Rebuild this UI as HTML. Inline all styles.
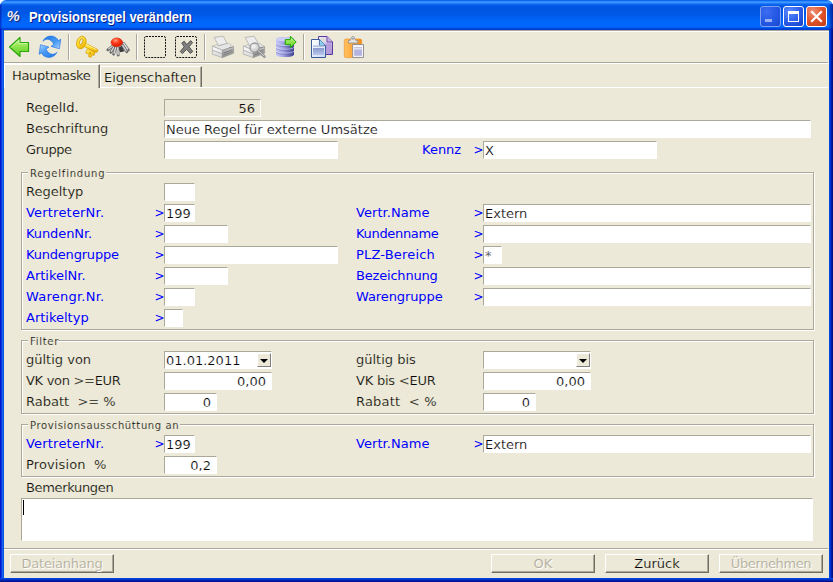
<!DOCTYPE html>
<html lang="de"><head><meta charset="utf-8"><title>Provisionsregel verändern</title>
<style>
html,body{margin:0;padding:0;background:#ECE9D8;}
body{width:833px;height:582px;position:relative;overflow:hidden;font-family:"DejaVu Sans","Liberation Sans",sans-serif;font-size:13px;color:#000;}
#win{position:absolute;left:0;top:0;width:833px;height:582px;background:#ECE9D8;overflow:hidden;}
#tb{position:absolute;left:0;top:0;width:833px;height:30px;border-radius:6px 6px 0 0;
background:linear-gradient(to bottom,#0054E3 0,#2A8BFF 1.5px,#3F97FF 2.5px,#0E6CF6 4px,#0057E4 6px,#0055E0 9px,#005AE8 15px,#0064F8 20px,#0068FF 26px,#0060F4 27.5px,#0046DC 28.5px,#0038CC 30px);}
#tbc{position:absolute;left:0;top:0;width:833px;height:8px;background:#fff;z-index:0}
#bl{position:absolute;left:0;top:30px;width:4px;height:552px;background:linear-gradient(to right,#0016CB 0px,#0016CB 1px,#0A38DE 1px,#0A38DE 2px,#1664EF 2px,#1664EF 3px,#0852DD 3px,#0852DD 4px)}
#br{position:absolute;left:829px;top:30px;width:4px;height:552px;background:linear-gradient(to right,#0046DC 0px,#0046DC 1px,#0033CC 1px,#0033CC 2px,#001CA6 2px,#001CA6 3px,#00128A 3px,#00128A 4px)}
#bb{position:absolute;left:0;top:578px;width:833px;height:4px;background:linear-gradient(to bottom,#0046DC 0px,#0046DC 1px,#0033CC 1px,#0033CC 2px,#0022AC 2px,#0022AC 3px,#00138C 3px,#00138C 4px)}
#title{position:absolute;left:29px;top:9px;font:bold 14px "Liberation Sans",sans-serif;color:#fff;text-shadow:1px 1px 0 #0A1883;white-space:nowrap;line-height:16px;transform:scaleX(0.922);transform-origin:0 0}
#ticon{position:absolute;left:6.5px;top:9px;font:bold 14.5px "Liberation Sans",sans-serif;color:#F0F0FA;text-shadow:1px 1px 1px #1A2360;line-height:14px;transform:skewX(-8deg)}
.cb{position:absolute;top:6px;width:21px;height:21px;border-radius:3px;box-sizing:border-box;border:1px solid #fff;}
#bmin{left:760px;background:radial-gradient(circle at 30% 25%,#3C6CF0 0,#2458E4 55%,#1A48CC 100%);border-color:#7F9FF0}
#bmax{left:783px;background:radial-gradient(circle at 30% 25%,#5C8CFF 0,#2A5CE8 55%,#1440C4 100%);}
#bcl{left:806px;background:radial-gradient(circle at 30% 25%,#F09078 0,#E0542C 50%,#C03A14 100%);}
#l30{position:absolute;left:4px;top:30px;width:825px;height:1px;background:#ACA899}
#l31{position:absolute;left:4px;top:31px;width:825px;height:1px;background:#fff}
.hl{position:absolute;height:2px;border-top:1px solid #ACA899;border-bottom:1px solid #fff;box-sizing:border-box}
.vs{position:absolute;top:34px;width:2px;height:26px;border-left:1px solid #ACA899;border-right:1px solid #fff;box-sizing:border-box}
.ic{position:absolute;overflow:visible}
.l{position:absolute;white-space:nowrap;line-height:18px;height:18px;padding-top:0px}
.b{color:#0000FF}
.gt{font-size:12px}
.f{position:absolute;box-sizing:border-box;background:#fff;border:1px solid #fff;border-top-color:#ACA899;border-left-color:#ACA899;white-space:nowrap;overflow:hidden;line-height:16px;padding:0 5px 0 1px}
.f span{position:relative;top:1px}
.f.dis{background:#ECE9D8}
.g{position:absolute;box-sizing:border-box;border:1px solid #ACA899;box-shadow:1px 1px 0 #fff, inset 1px 1px 0 #fff}
.lg{position:absolute;background:#ECE9D8;font-size:10px;line-height:15px;height:14px;letter-spacing:0.7px;white-space:nowrap;padding-left:2px;box-sizing:border-box}
.tab{position:absolute;box-sizing:border-box;white-space:nowrap}
.btn{position:absolute;top:554px;width:104px;height:19px;box-sizing:border-box;border:1px solid #716F64;border-top-color:#fff;border-left-color:#fff;box-shadow:inset -1px -1px 0 #ACA899;text-align:center;line-height:17px;white-space:nowrap}
.btn.d{color:#ACA899;text-shadow:1px 1px 0 #fff}
.cbtn{position:absolute;right:0px;top:1px;width:14px;height:14px;box-sizing:border-box;background:#ECE9D8;border:1px solid #808080;border-top-color:#fff;border-left-color:#fff}
.cbtn:after{content:"";position:absolute;left:2px;top:5px;border:4px solid transparent;border-top:4px solid #000;border-bottom:0;width:0;height:0}
.caret{position:absolute;left:1px;top:1px;width:1px;height:15px;background:#000}
.l,.tab,.btn,.lg{-webkit-text-stroke:0.2px #ECE9D8}
.f span{-webkit-text-stroke:0.2px #fff}
.f.dis span{-webkit-text-stroke:0.2px #ECE9D8}
.l.b{-webkit-text-stroke:0}
</style></head><body>
<div id="win">
<div id="tbc"></div>
<div id="tb"></div>
<div style="position:absolute;left:829px;top:4px;width:4px;height:26px;background:linear-gradient(to right,rgba(0,20,140,0.1),rgba(0,16,130,0.75))"></div><div style="position:absolute;left:0;top:4px;width:2px;height:26px;background:linear-gradient(to right,rgba(0,16,170,0.7),rgba(0,20,170,0.1))"></div>
<div id="ticon">%</div>
<div id="title">Provisionsregel verändern</div>
<div class="cb" id="bmin"><svg width="19" height="19" viewBox="0 0 19 19"><rect x="4" y="12" width="7" height="3" fill="#9AB0F0"/></svg></div>
<div class="cb" id="bmax"><svg width="19" height="19" viewBox="0 0 19 19"><rect x="4.5" y="5.5" width="10" height="9" fill="none" stroke="#fff" stroke-width="1"/><rect x="4" y="4" width="11" height="3" fill="#fff"/></svg></div>
<div class="cb" id="bcl"><svg width="19" height="19" viewBox="0 0 19 19"><path d="M5 5 L14 14 M14 5 L5 14" stroke="#fff" stroke-width="2.2" stroke-linecap="square"/></svg></div>
<div id="bl"></div><div id="br"></div><div id="bb"></div>
<div id="l30"></div><div id="l31"></div>
<!--TBS--><svg class="ic" style="left:0;top:30px" width="833" height="33" viewBox="0 30 833 33">
<defs>
<linearGradient id="gG" x1="0" y1="0" x2="0" y2="1"><stop offset="0" stop-color="#CCF998"/><stop offset="0.5" stop-color="#8CE24C"/><stop offset="1" stop-color="#5CCB24"/></linearGradient>
<linearGradient id="gB" x1="0" y1="0" x2="1" y2="1"><stop offset="0" stop-color="#1C74E6"/><stop offset="0.6" stop-color="#4C9CF4"/><stop offset="1" stop-color="#B4DAFF"/></linearGradient>
<linearGradient id="gY" x1="0" y1="0" x2="1" y2="1"><stop offset="0" stop-color="#FFF27A"/><stop offset="0.5" stop-color="#FFD522"/><stop offset="1" stop-color="#E0A400"/></linearGradient>
<radialGradient id="gR" cx="0.4" cy="0.3" r="0.7"><stop offset="0" stop-color="#FF9A80"/><stop offset="0.45" stop-color="#FF3A18"/><stop offset="1" stop-color="#D41800"/></radialGradient>
<linearGradient id="gP1" x1="0" y1="0" x2="0" y2="1"><stop offset="0" stop-color="#FFFFFF"/><stop offset="1" stop-color="#D4D4D4"/></linearGradient>
<linearGradient id="gP2" x1="0" y1="0" x2="0" y2="1"><stop offset="0" stop-color="#C8C8C8"/><stop offset="1" stop-color="#8C8C8C"/></linearGradient>
<linearGradient id="gD" x1="0" y1="0" x2="1" y2="0"><stop offset="0" stop-color="#C4C6F4"/><stop offset="0.35" stop-color="#A8AAE6"/><stop offset="0.8" stop-color="#5E60AE"/><stop offset="1" stop-color="#3E4088"/></linearGradient>
<linearGradient id="gC1" x1="0" y1="0" x2="1" y2="1"><stop offset="0" stop-color="#FFFFFF"/><stop offset="1" stop-color="#C8D8F4"/></linearGradient>
<linearGradient id="gC2" x1="0" y1="0" x2="1" y2="1"><stop offset="0" stop-color="#F4F0FA"/><stop offset="1" stop-color="#A88CD4"/></linearGradient>
<linearGradient id="gO" x1="0" y1="0" x2="1" y2="0"><stop offset="0" stop-color="#FFC060"/><stop offset="0.5" stop-color="#FFA838"/><stop offset="1" stop-color="#F08C18"/></linearGradient>
<linearGradient id="gW" x1="0" y1="0" x2="0" y2="1"><stop offset="0" stop-color="#8898CC"/><stop offset="1" stop-color="#B8C8EC"/></linearGradient>
</defs>
<!-- back arrow -->
<path d="M9.5,47 L20,37.5 L20,42.5 L28.5,42.5 L28.5,51.5 L20,51.5 L20,56.5 Z" fill="url(#gG)" stroke="#2FA50E" stroke-width="1.2" stroke-linejoin="round"/>
<path d="M11.5,47 L19,40 L19,43.6 L27.4,43.6" fill="none" stroke="#D8FBB0" stroke-width="0.9" opacity="0.8"/>
<!-- refresh -->
<g id="rf">
<path id="rfa" d="M43,41.2 C44.6,37.4 49,35.2 53.4,36.4 C55.6,37 57.4,38.6 58.4,40.6 L60.8,39.2 L59.4,48.8 L51,46.4 L53.8,44.2 C52.8,41.8 50.6,39.6 47.6,39.2 C45.8,39.1 44.2,39.9 43,41.2 Z" fill="url(#gB)" stroke="#1A6CE0" stroke-width="0.6" stroke-linejoin="round"/>
<use href="#rfa" transform="rotate(180 49.95 46.75)"/>
</g>
<!-- separators -->
<g shape-rendering="crispEdges">
<rect x="68" y="34" width="1" height="26" fill="#ACA899"/><rect x="69" y="34" width="1" height="26" fill="#fff"/>
<rect x="136" y="34" width="1" height="26" fill="#ACA899"/><rect x="137" y="34" width="1" height="26" fill="#fff"/>
<rect x="204" y="34" width="1" height="26" fill="#ACA899"/><rect x="205" y="34" width="1" height="26" fill="#fff"/>
<rect x="303" y="34" width="1" height="26" fill="#ACA899"/><rect x="304" y="34" width="1" height="26" fill="#fff"/>
</g>
<!-- key -->
<g>
<path d="M87.8,48.6 L95,52.2 L94,55.4 L92,54.6 L91,57.4 L88.4,56.4 L89.2,54.2 L85.8,53 L86.6,50.4 Z" fill="url(#gY)" stroke="#D39B00" stroke-width="0.7" stroke-linejoin="round"/>
<path d="M89.2,52 L90.6,52.6 L90,54.4" fill="none" stroke="#B88400" stroke-width="0.8"/>
<path d="M84.6,42.8 L97.6,49.4 L97.8,51.2 L96.2,52.4 L83.4,46.2 Z" fill="url(#gY)" stroke="#D39B00" stroke-width="0.7" stroke-linejoin="round"/>
<ellipse cx="81.3" cy="42.5" rx="4.6" ry="6.4" transform="rotate(18 81.3 42.5)" fill="url(#gY)" stroke="#D8A000" stroke-width="0.8"/>
<ellipse cx="81.2" cy="41.6" rx="1.5" ry="3.1" transform="rotate(18 81.2 41.6)" fill="#ECE9D8" stroke="#C89400" stroke-width="0.7"/>
<path d="M85.6,44.2 L96.6,49.8" stroke="#FFF6A0" stroke-width="0.9" fill="none"/>
</g>
<!-- bug -->
<g stroke-linecap="round" fill="none">
<path d="M121.6,46.6 L123.6,50.8 L120.6,51.6 L118.6,48 Z" fill="#3C3C3C" stroke="#3C3C3C" stroke-width="1.2"/>
<path d="M113,46 L107.8,49.8" stroke="#686868" stroke-width="2.8"/><path d="M113,45.8 L108.8,48.8" stroke="#D2D2D2" stroke-width="1.4"/>
<path d="M114,47.2 L110.8,52.2" stroke="#686868" stroke-width="2.8"/><path d="M114,47 L111.4,51.2" stroke="#D6D6D6" stroke-width="1.4"/>
<path d="M115.6,47.8 L113.6,54.2" stroke="#686868" stroke-width="2.8"/><path d="M115.7,47.6 L114,53.2" stroke="#D6D6D6" stroke-width="1.4"/>
<path d="M117.8,47.8 L118.2,55.2" stroke="#686868" stroke-width="2.8"/><path d="M117.8,47.6 L118.1,54.2" stroke="#E0E0E0" stroke-width="1.4"/>
<path d="M123.6,43.4 L128.4,50" stroke="#686868" stroke-width="2.8"/><path d="M123.7,43.4 L127.6,49" stroke="#DCDCDC" stroke-width="1.5"/>
<path d="M122.6,45.4 L126.8,52" stroke="#686868" stroke-width="2.6"/><path d="M122.7,45.4 L126.2,51" stroke="#D8D8D8" stroke-width="1.3"/>
<ellipse cx="116.8" cy="42.3" rx="5.8" ry="4.4" fill="url(#gR)" stroke="#D02000" stroke-width="0.5"/>
</g>
<!-- dashed boxes -->
<rect x="144.5" y="36.5" width="21" height="21" rx="1.5" fill="none" stroke="#111" stroke-width="1" stroke-dasharray="2 1"/>
<rect x="175.5" y="36.5" width="21" height="21" rx="1.5" fill="none" stroke="#111" stroke-width="1" stroke-dasharray="2 1"/>
<path d="M181.8,43 L184.2,41.2 L186.8,44.6 L190.6,40.6 L192.6,42.6 L189,46.8 L192.8,51.4 L190.4,53.4 L186.6,49.4 L182.4,53.6 L180.2,51.6 L184.2,46.8 Z" fill="#808080" stroke="#4A4A4A" stroke-width="0.9" stroke-linejoin="round"/>
<!-- printer -->
<g id="prn">
<path d="M214.2,37.4 L223.2,36.2 L227.2,43.4 L218.4,45.6 Z" fill="#EDEDED" stroke="#9A9A9A" stroke-width="0.6"/>
<path d="M212.4,46.2 L217.4,44.6 L218.6,46 L227,43.6 L228.6,43.4 L233.6,46.6 L222.4,50.2 Z" fill="#E6E6E6" stroke="#A0A0A0" stroke-width="0.5"/>
<path d="M212.4,46.2 L222.4,50.2 L222.4,57.6 L212.4,54.2 Z" fill="url(#gP1)" stroke="#9C9C9C" stroke-width="0.6"/>
<path d="M222.4,50.2 L233.6,46.6 L233.6,53.2 L222.4,57.6 Z" fill="url(#gP2)" stroke="#8A8A8A" stroke-width="0.6"/>
<path d="M212.6,50.4 L222.4,54 L233.4,50" fill="none" stroke="#9A9A9A" stroke-width="0.7"/>
<path d="M223.6,53 L232.6,49.6 M223.6,55 L232.6,51.6" stroke="#6E6E6E" stroke-width="0.7"/>
<ellipse cx="230.4" cy="47.4" rx="1.4" ry="0.7" fill="#909090"/>
</g>
<!-- print preview -->
<use href="#prn" x="31" y="0"/>
<circle cx="254.6" cy="47.6" r="4.6" fill="#D8D8D8" fill-opacity="0.9" stroke="#9A9A9A" stroke-width="1.3"/>
<circle cx="253.6" cy="46.4" r="2.2" fill="#F2F2F2" opacity="0.8"/>
<path d="M258,51 L264.4,56.6" stroke="#8C8C8C" stroke-width="2.6" stroke-linecap="round"/>
<path d="M258.2,50.8 L264.2,56" stroke="#D8D8D8" stroke-width="1" stroke-linecap="round"/>
<!-- database -->
<g>
<path d="M276,39.4 C276,36.2 294,36.2 294,39.4 L294,54.4 C294,57.8 276,57.8 276,54.4 Z" fill="url(#gD)"/>
<ellipse cx="285" cy="39.2" rx="9" ry="2.3" fill="#CCCEF6"/>
<path d="M276,43.6 C278,46.2 292,46.2 294,43.6 M276,47.4 C278,50 292,50 294,47.4 M276,51.2 C278,53.8 292,53.8 294,51.2" fill="none" stroke="#E0E2FC" stroke-width="0.8" opacity="0.75"/>
<path d="M276,44.6 C278,47.2 292,47.2 294,44.6 M276,48.4 C278,51 292,51 294,48.4 M276,52.2 C278,54.8 292,54.8 294,52.2" fill="none" stroke="#5658A6" stroke-width="0.7" opacity="0.6"/>
<path d="M285.3,39.6 L290.4,39.6 L290.4,36.2 L296.2,42 L290.4,47.8 L290.4,44.6 L285.3,44.6 Z" fill="url(#gG)" stroke="#22A808" stroke-width="1" stroke-linejoin="round"/>
</g>
<!-- copy -->
<g>
<path d="M318.5,36.5 L327,36.5 L332.5,42 L332.5,54.5 L318.5,54.5 Z" fill="url(#gC2)" stroke="#5B3C9C" stroke-width="1"/>
<rect x="320" y="38" width="6" height="4" fill="#DCDCDC"/>
<rect x="325.5" y="43.5" width="5.5" height="9.5" fill="#B79CDC"/>
<path d="M327,36.5 L327,42 L332.5,42" fill="#C8B0E8" stroke="#5B3C9C" stroke-width="0.8"/>
<path d="M311.5,39.5 L319.5,39.5 L325.5,45.5 L325.5,57.5 L311.5,57.5 Z" fill="url(#gC1)" stroke="#3A5A9C" stroke-width="1"/>
<path d="M319.5,39.5 L319.5,45.5 L325.5,45.5" fill="#8CD0F0" stroke="#3A5A9C" stroke-width="0.8"/>
<rect x="313" y="45.4" width="11" height="1.6" fill="#B4C0E0"/>
<rect x="313" y="48" width="11" height="7" fill="url(#gW)"/>
</g>
<!-- paste -->
<g>
<rect x="344.3" y="39" width="17.4" height="18.6" rx="1.6" fill="url(#gO)" stroke="#F09020" stroke-width="0.6"/>
<path d="M348.4,43 L348.4,40.6 L350.2,40.4 L352.2,36.6 L353.8,36.6 L355.8,40.4 L357.8,40.6 L357.8,43 Z" fill="#E4E4E4" stroke="#8E8E8E" stroke-width="0.8" stroke-linejoin="round"/>
<circle cx="353" cy="38.8" r="0.9" fill="#8A8A8A"/>
<rect x="352.7" y="44.6" width="10.8" height="12.8" fill="#F6F6FC" stroke="#8A8A90" stroke-width="0.9"/>
<rect x="354.2" y="47" width="7.8" height="1.4" fill="#C4C4DC"/>
<rect x="354.2" y="49.4" width="7.8" height="6.4" fill="#B4B4E0"/>
</g>
</svg>
<!--TBE-->
<div class="hl" style="left:4px;top:62px;width:824px"></div><div style="position:absolute;left:828px;top:63px;width:1px;height:1px;background:#fff"></div>
<!--TABS-->
<div class="tab" style="left:4px;top:64px;width:96px;height:24px;border-left:1px solid #fff;border-top:1px solid #fff;border-right:1px solid #716F64;box-shadow:inset -1px 0 0 #ACA899;line-height:22px;padding-left:7px;letter-spacing:-0.33px;z-index:2;background:#ECE9D8">Hauptmaske</div>
<div class="tab" style="left:100px;top:66px;width:102px;height:21px;border-left:1px solid #fff;border-top:1px solid #fff;border-right:1px solid #716F64;box-shadow:inset -1px 0 0 #ACA899;line-height:22px;padding-left:3px;">Eigenschaften</div>
<div style="position:absolute;left:100px;top:87px;width:728px;height:1px;background:#fff"></div>
<div class="l" style="left:26px;top:99px;">RegelId.</div>
<div class="f dis" style="left:164px;top:99px;width:97px;height:18px;text-align:right;"><span>56</span></div>
<div class="l" style="left:26px;top:120px;">Beschriftung</div>
<div class="f " style="left:164px;top:120px;width:647px;height:18px;"><span>Neue Regel für externe Umsätze</span></div>
<div class="l" style="left:26px;top:141px;letter-spacing:-0.42px;">Gruppe</div>
<div class="f " style="left:164px;top:141px;width:174px;height:18px;"><span></span></div>
<div class="l b" style="left:422px;top:141px;">Kennz</div>
<div class="l b gt" style="left:473.6px;top:141px">&gt;</div>
<div class="f " style="left:483px;top:141px;width:174px;height:18px;"><span>X</span></div>
<div class="g" style="left:21px;top:172px;width:793px;height:158px"></div><div class="lg" style="left:28px;top:166px;width:78px;letter-spacing:0.78px">Regelfindung</div>
<div class="l" style="left:26px;top:183px;">Regeltyp</div>
<div class="f " style="left:164px;top:183px;width:31px;height:18px;"><span></span></div>
<div class="l b" style="left:26px;top:204px;letter-spacing:0.2px;">VertreterNr.</div>
<div class="l b gt" style="left:154.6px;top:204px">&gt;</div>
<div class="f " style="left:164px;top:204px;width:31px;height:18px;"><span>199</span></div>
<div class="l b" style="left:26px;top:225px;letter-spacing:-0.09px;">KundenNr.</div>
<div class="l b gt" style="left:154.6px;top:225px">&gt;</div>
<div class="f " style="left:164px;top:225px;width:64px;height:18px;"><span></span></div>
<div class="l b" style="left:26px;top:246px;letter-spacing:-0.2px;">Kundengruppe</div>
<div class="l b gt" style="left:154.6px;top:246px">&gt;</div>
<div class="f " style="left:164px;top:246px;width:174px;height:18px;"><span></span></div>
<div class="l b" style="left:26px;top:267px;">ArtikelNr.</div>
<div class="l b gt" style="left:154.6px;top:267px">&gt;</div>
<div class="f " style="left:164px;top:267px;width:64px;height:18px;"><span></span></div>
<div class="l b" style="left:26px;top:288px;letter-spacing:0.24px;">Warengr.Nr.</div>
<div class="l b gt" style="left:154.6px;top:288px">&gt;</div>
<div class="f " style="left:164px;top:288px;width:31px;height:18px;"><span></span></div>
<div class="l b" style="left:26px;top:309px;">Artikeltyp</div>
<div class="l b gt" style="left:154.6px;top:309px">&gt;</div>
<div class="f " style="left:164px;top:309px;width:19px;height:18px;"><span></span></div>
<div class="l b" style="left:356px;top:204px;letter-spacing:0.05px;">Vertr.Name</div>
<div class="l b gt" style="left:473.6px;top:204px">&gt;</div>
<div class="f " style="left:483px;top:204px;width:328px;height:18px;"><span>Extern</span></div>
<div class="l b" style="left:356px;top:225px;letter-spacing:-0.32px;">Kundenname</div>
<div class="l b gt" style="left:473.6px;top:225px">&gt;</div>
<div class="f " style="left:483px;top:225px;width:328px;height:18px;"><span></span></div>
<div class="l b" style="left:356px;top:246px;letter-spacing:0.19px;">PLZ-Bereich</div>
<div class="l b gt" style="left:473.6px;top:246px">&gt;</div>
<div class="f " style="left:483px;top:246px;width:19px;height:18px;"><span>*</span></div>
<div class="l b" style="left:356px;top:267px;letter-spacing:-0.19px;">Bezeichnung</div>
<div class="l b gt" style="left:473.6px;top:267px">&gt;</div>
<div class="f " style="left:483px;top:267px;width:328px;height:18px;"><span></span></div>
<div class="l b" style="left:356px;top:288px;letter-spacing:-0.1px;">Warengruppe</div>
<div class="l b gt" style="left:473.6px;top:288px">&gt;</div>
<div class="f " style="left:483px;top:288px;width:328px;height:18px;"><span></span></div>
<div class="g" style="left:21px;top:340px;width:793px;height:74px"></div><div class="lg" style="left:28px;top:334px;width:30px;letter-spacing:0.7px">Filter</div>
<div class="l" style="left:26px;top:351px;">gültig von</div>
<div class="f combo" style="left:164px;top:351px;width:108px;height:18px;"><span>01.01.2011</span><i class="cbtn"></i></div>
<div class="l" style="left:356px;top:351px;">gültig bis</div>
<div class="f combo" style="left:483px;top:351px;width:108px;height:18px;"><span></span><i class="cbtn"></i></div>
<div class="l" style="left:26px;top:372px;letter-spacing:-0.3px;">VK von &gt;=EUR</div>
<div class="f num" style="left:164px;top:372px;width:108px;height:18px;text-align:right;"><span>0,00</span></div>
<div class="l" style="left:356px;top:372px;letter-spacing:-0.22px;">VK bis &lt;EUR</div>
<div class="f num" style="left:483px;top:372px;width:108px;height:18px;text-align:right;"><span>0,00</span></div>
<div class="l" style="left:26px;top:393px;">Rabatt&nbsp; &gt;= %</div>
<div class="f num" style="left:164px;top:393px;width:53px;height:18px;text-align:right;"><span>0</span></div>
<div class="l" style="left:356px;top:393px;letter-spacing:0.18px;">Rabatt&nbsp; &lt; %</div>
<div class="f num" style="left:483px;top:393px;width:53px;height:18px;text-align:right;"><span>0</span></div>
<div class="g" style="left:21px;top:424px;width:793px;height:53px"></div><div class="lg" style="left:28px;top:418px;width:152px;letter-spacing:0.62px">Provisionsausschüttung an</div>
<div class="l b" style="left:26px;top:435px;letter-spacing:0.2px;">VertreterNr.</div>
<div class="l b gt" style="left:154.6px;top:435px">&gt;</div>
<div class="f " style="left:164px;top:435px;width:31px;height:18px;"><span>199</span></div>
<div class="l b" style="left:356px;top:435px;letter-spacing:0.05px;">Vertr.Name</div>
<div class="l b gt" style="left:473.6px;top:435px">&gt;</div>
<div class="f " style="left:483px;top:435px;width:328px;height:18px;"><span>Extern</span></div>
<div class="l" style="left:26px;top:456px;letter-spacing:0.12px;">Provision&nbsp; %</div>
<div class="f num" style="left:164px;top:456px;width:53px;height:18px;text-align:right;"><span>0,2</span></div>
<div class="l" style="left:26px;top:479px;letter-spacing:-0.34px;">Bemerkungen</div>
<div class="f ta" style="left:21px;top:498px;width:792px;height:43px"><i class="caret"></i></div>
<div class="hl" style="left:4px;top:548px;width:824px"></div>
<div class="btn d" style="left:10px;letter-spacing:-0.25px">Dateianhang</div>
<div class="btn d" style="left:491px">OK</div>
<div class="btn" style="left:605px">Zurück</div>
<div class="btn d" style="left:719px;letter-spacing:-0.4px">Übernehmen</div>
</div>
</body></html>
